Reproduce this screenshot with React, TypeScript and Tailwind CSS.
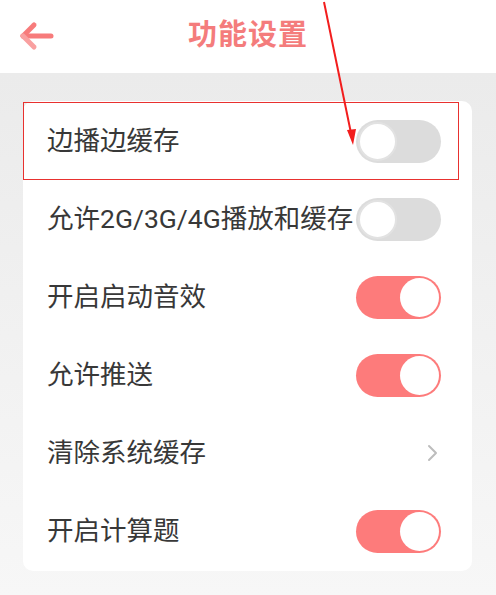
import type { ReactNode } from "react";

type Row = { label: string; kind: "on" | "off" | "link" };

const ROWS: Row[] = [
  { label: "边播边缓存", kind: "off" },
  { label: "允许2G/3G/4G播放和缓存", kind: "off" },
  { label: "开启启动音效", kind: "on" },
  { label: "允许推送", kind: "on" },
  { label: "清除系统缓存", kind: "link" },
  { label: "开启计算题", kind: "on" },
];

function Toggle({ on }: { on: boolean }) {
  return (
    <div
      className={`flex h-[43px] w-[85px] shrink-0 items-center rounded-full px-[2px] ${
        on ? "justify-end bg-[#fd7b7b]" : "justify-start bg-[#dcdcdc]"
      }`}
    >
      <div
        className={`h-[39px] w-[39px] rounded-full bg-white ${
          on ? "" : "border-2 border-[#e2e2e2]"
        }`}
      />
    </div>
  );
}

function Chevron() {
  return (
    <svg width="14" height="18" viewBox="0 0 14 18" className="mr-[1px]">
      <path d="M3 2 L10 9 L3 16" fill="none" stroke="#bdbdbd" strokeWidth="2" strokeLinecap="round" strokeLinejoin="round" />
    </svg>
  );
}

function SettingRow({ row, children }: { row: Row; children?: ReactNode }) {
  return (
    <div className="relative flex h-[78px] items-center justify-between pl-[24px] pr-[31px]">
      <span className="whitespace-nowrap text-[26.5px] leading-none text-[#383838]">{row.label}</span>
      {row.kind === "link" ? <Chevron /> : <Toggle on={row.kind === "on"} />}
      {children}
    </div>
  );
}

export default function App() {
  return (
    <div
      className="relative h-[595px] w-[496px] overflow-hidden bg-white"
      style={{ fontFamily: 'Roboto, "Noto Sans CJK SC", sans-serif' }}
    >
      {/* header */}
      <div className="grid h-[73px] grid-cols-[1fr_auto_1fr] items-center bg-white">
        <div className="pl-[19px]">
          <svg width="36" height="32" viewBox="0 0 36 32">
            <path d="M4 15 L32 15" stroke="#f77b7b" strokeWidth="5" strokeLinecap="round" />
            <path d="M15 4 L4 15" stroke="#f77b7b" strokeWidth="5" strokeLinecap="round" />
            <path d="M4 15 L15 26" stroke="#f9a0a0" strokeWidth="5" strokeLinecap="round" />
          </svg>
        </div>
        <h1 className="-mt-[3px] text-[29px] font-bold leading-none tracking-[1px] text-[#f47c7c]">功能设置</h1>
        <div />
      </div>

      {/* body */}
      <div className="h-[522px] bg-gradient-to-b from-[#ebebeb] to-[#f7f7f7] px-[23px] pt-[28px]">
        <div className="w-[449px] rounded-[10px] bg-white py-[1px]">
          {ROWS.map((row, i) => (
            <SettingRow key={row.label} row={row}>
              {i === 0 && (
                <div className="pointer-events-none absolute left-0 top-0 h-[78px] w-[436px] border-[1.5px] border-[#e8312f]" />
              )}
            </SettingRow>
          ))}
        </div>
      </div>

      {/* annotation arrow */}
      <svg className="pointer-events-none absolute left-0 top-0" width="496" height="595" viewBox="0 0 496 595">
        <line x1="324" y1="2" x2="352" y2="138" stroke="#f21d1d" strokeWidth="2" />
        <path d="M347 130 L353 145 L356 129 Z" fill="#f21d1d" />
      </svg>
    </div>
  );
}
